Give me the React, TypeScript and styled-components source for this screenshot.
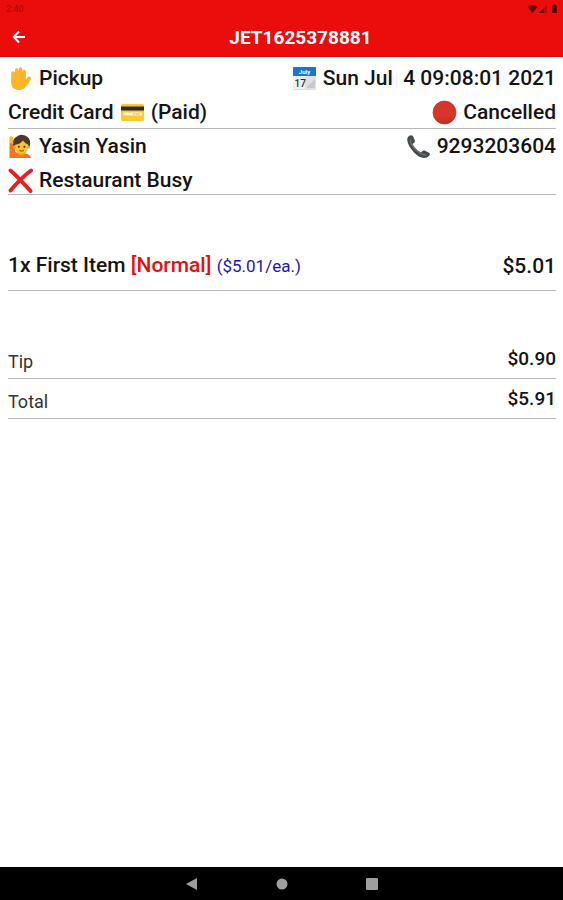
import React from "react";
import styled, { createGlobalStyle } from "styled-components";

const GlobalStyle = createGlobalStyle`
  * { box-sizing: border-box; }
  body { margin: 0; background: #fff; color: #141414; font-family: Roboto, sans-serif; }
`;

const Screen = styled.div`
  min-height: 100vh;
  display: flex;
  flex-direction: column;
`;

const TopArea = styled.header`
  background: #ea0d0c;
  border-bottom: 1px solid #d50b0b;
`;

const StatusBar = styled.div`
  display: flex;
  justify-content: space-between;
  align-items: center;
  height: 18px;
  padding: 0 4px 0 6px;
  color: #a50a08;
  font-size: 9px;
  line-height: 12px;
`;

const StatusIcons = styled.svg`
  width: 32px;
  height: 10px;
`;

const TitleBar = styled.div`
  display: grid;
  grid-template-columns: 38px 1fr;
  align-items: center;
  height: 38px;
`;

const BackButton = styled.button`
  display: flex;
  align-items: center;
  justify-content: center;
  height: 38px;
  padding: 0;
  border: 0;
  background: none;
  color: #fff;
`;

const Title = styled.h1`
  margin: 0;
  padding-top: 2px;
  color: #fff;
  font-size: 19px;
  line-height: 24px;
  font-weight: 700;
  text-align: center;
`;

const Content = styled.main`
  flex: 1;
  padding: 0 7px 0 8px;
`;

const Group = styled.section<{ $top: number; $bottom: number }>`
  display: flex;
  flex-direction: column;
  gap: 6px;
  padding: ${(p) => p.$top}px 0 ${(p) => p.$bottom}px;
  border-bottom: 1px solid #b8b8b8;
`;

const Row = styled.div`
  display: flex;
  justify-content: space-between;
  align-items: center;
`;

const Label = styled.span`
  display: inline-flex;
  align-items: center;
  gap: 6px;
  height: 28px;
  font-size: 21px;
  line-height: 28px;
  font-weight: 500;
  white-space: pre;
`;

const ItemName = styled.span`
  font-size: 21px;
  line-height: 28px;
  font-weight: 500;
`;

const Option = styled.span`
  color: #e3100e;
`;

const Each = styled.span`
  color: #1b14b4;
  font-size: 17px;
  font-weight: 400;
`;

const Price = styled.span<{ $small?: boolean }>`
  font-size: ${(p) => (p.$small ? 19 : 21)}px;
  line-height: 28px;
  font-weight: 500;
`;

const SummaryName = styled.span`
  padding-top: 6px;
  color: #333;
  font-size: 18px;
  line-height: 22px;
`;

const Emoji = styled.svg`
  width: 25px;
  height: 25px;
  flex: none;
`;

const NavBar = styled.nav`
  display: flex;
  justify-content: center;
  align-items: center;
  gap: 66px;
  height: 33px;
  background: #000;
`;

const NavButton = styled.button`
  display: flex;
  width: 24px;
  height: 24px;
  padding: 5px;
  border: 0;
  background: none;
  color: #9e9e9e;
`;

const Hand = () => (
  <Emoji viewBox="0 0 25 25" aria-hidden="true">
    <g stroke="#fbb623" strokeWidth="3.5" strokeLinecap="round" fill="none">
      <path d="M5 7v9M8.700 4v11M12.500 3v12M16.200 5.200v11" />
      <path d="M21 12.500l-3 5" strokeWidth="4" />
    </g>
    <path d="M3.300 12h14.500v4l3-2c1 1-1 4-3 6.500-2 3-4 3.700-7.500 3.500-4-.3-7-3-7-7z" fill="#fbb623" />
    <path d="M6.900 6v6M10.700 5v7M14.400 6v6M17.800 15c-2 0-4 1.500-4.300 4" fill="none" stroke="#f0a41c" strokeWidth=".7" />
  </Emoji>
);

const Card = () => (
  <Emoji viewBox="0 0 25 25" aria-hidden="true">
    <rect x="1" y="4" width="23" height="17" rx="1.500" fill="#fcc92f" />
    <rect x="1" y="6.500" width="23" height="4" fill="#2d2a2c" />
    <rect x="3" y="12.500" width="19" height="3" fill="#fff4d0" />
    <path d="M13 14.500l2-1 1 1 2-1 2 1" stroke="#8f8a78" strokeWidth=".6" fill="none" />
  </Emoji>
);

const Calendar = () => (
  <Emoji viewBox="0 0 25 25" aria-hidden="true">
    <rect x="1" y="1" width="23" height="23" rx="1" fill="#e0e0e0" />
    <rect x="1" y="9" width="12" height="14" fill="#f0f0f0" />
    <path d="M1 2q0-1 1-1h21q1 0 1 1v8H1z" fill="#1976d2" />
    <text x="12.500" y="7.500" textAnchor="middle" fontFamily="Roboto, sans-serif" fontSize="6" fontWeight="700" fill="#fff">July</text>
    <text x="2.500" y="21" fontFamily="Roboto, sans-serif" fontSize="10" fill="#333">17</text>
    <path d="M15 21l8-8v9h-8z" fill="#c9c9c9" />
  </Emoji>
);

const RedCircle = () => (
  <Emoji viewBox="0 0 25 25" aria-hidden="true">
    <defs>
      <linearGradient id="red-ball" x1="0" y1="0" x2="0" y2="1">
        <stop offset="0" stopColor="#d0372a" />
        <stop offset=".6" stopColor="#dc3528" />
        <stop offset="1" stopColor="#bd3025" />
      </linearGradient>
    </defs>
    <circle cx="12.500" cy="12.500" r="11.500" fill="url(#red-ball)" stroke="#b93227" strokeWidth=".7" />
  </Emoji>
);

const Person = () => (
  <Emoji viewBox="0 0 25 25" aria-hidden="true">
    <path d="M1.500 24V9l4-1 2 10q5 3 9 1.500 6 .5 6.500 4.500z" fill="#ee7623" />
    <path d="M1.500 9Q.5 4 2.500 2l2.500 1 1 4-.5 3z" fill="#fbb92c" />
    <path d="M9 19q4.500 5 9 0v-3H9z" fill="#f2a126" />
    <path d="M5.500 12Q4 4.500 9 2.500 12-.5 17 1.500q6 2 5 10l-1 2H6z" fill="#50352c" />
    <ellipse cx="13.500" cy="12.500" rx="6.900" ry="7" fill="#fcc231" />
    <circle cx="6.500" cy="13" r="1.500" fill="#f2a126" />
    <circle cx="20.500" cy="13" r="1.500" fill="#f2a126" />
    <path d="M6.500 11q6-1 8.500-4.500 2 3.500 6 4.500l-.500-5-6-3-6 2z" fill="#50352c" />
    <circle cx="10.800" cy="12.800" r="1" fill="#44332b" />
    <circle cx="16.500" cy="12.800" r="1" fill="#44332b" />
    <path d="M11.300 16.200q2.400 1.500 4.600 0" stroke="#9a5a22" strokeWidth="1.100" fill="none" />
  </Emoji>
);

const Cross = () => (
  <Emoji viewBox="0 0 25 25" aria-hidden="true">
    <path d="M2.500 2.500Q10 9 22.500 23M23 2.500Q13 10 2.500 22.500" stroke="#e5201f" strokeWidth="3.900" strokeLinecap="round" fill="none" />
  </Emoji>
);

const Phone = () => (
  <Emoji viewBox="0 0 25 25" aria-hidden="true">
    <path d="M2 3Q4 0 7 2l2 5q0 2-2.500 3 3 6 8.500 8.500 1.500-2.500 3.500-2l5 2.500q1 1-.5 3-2 2-5 2-5-.5-10-5.500Q2 12 1.300 6.500 1 4 2 3z" fill="#454a4c" />
    <path d="M4.500 5q-1 4 5 10.500Q14 20.500 20 21" stroke="#6d7375" strokeWidth="1.300" fill="none" />
  </Emoji>
);

export default function App() {
  return (
    <Screen>
      <GlobalStyle />
      <TopArea>
        <StatusBar>
          <span>2:40</span>
          <StatusIcons viewBox="0 0 32 10" fill="#650504" aria-label="Wi-Fi, signal, battery">
            <path d="M.5 3Q5.500-1 10.500 3L5.500 9z" />
            <path d="M12 9l8-8v8z" opacity=".35" />
            <path d="M12 9l5-5v5z" />
            <path d="M25 1.500h1V.5h3v1h1V9h-5z" />
          </StatusIcons>
        </StatusBar>
        <TitleBar>
          <BackButton aria-label="Back">
            <svg width="14" height="14" viewBox="0 0 14 14" fill="none" stroke="currentColor" strokeWidth="2">
              <path d="M13 7H2M7 1.500L1.800 7 7 12.500" />
            </svg>
          </BackButton>
          <Title>JET1625378881</Title>
        </TitleBar>
      </TopArea>
      <Content>
        <Group $top={7} $bottom={2}>
          <Row>
            <Label><Hand />Pickup</Label>
            <Label><Calendar />{"Sun Jul  4 09:08:01 2021"}</Label>
          </Row>
          <Row>
            <Label>Credit Card<Card />(Paid)</Label>
            <Label><RedCircle />Cancelled</Label>
          </Row>
        </Group>
        <Group $top={3} $bottom={0}>
          <Row>
            <Label><Person />Yasin Yasin</Label>
            <Label><Phone />9293203604</Label>
          </Row>
          <Row>
            <Label><Cross />Restaurant Busy</Label>
          </Row>
        </Group>
        <Group $top={56} $bottom={10}>
          <Row>
            <ItemName>1x First Item <Option>[Normal]</Option> <Each>($5.01/ea.)</Each></ItemName>
            <Price>$5.01</Price>
          </Row>
        </Group>
        <Group $top={54} $bottom={5}>
          <Row>
            <SummaryName>Tip</SummaryName>
            <Price $small>$0.90</Price>
          </Row>
        </Group>
        <Group $top={6} $bottom={5}>
          <Row>
            <SummaryName>Total</SummaryName>
            <Price $small>$5.91</Price>
          </Row>
        </Group>
      </Content>
      <NavBar>
        <NavButton aria-label="Back">
          <svg width="14" height="14" viewBox="0 0 14 14" fill="currentColor"><path d="M12 1v12L1 7z" /></svg>
        </NavButton>
        <NavButton aria-label="Home">
          <svg width="14" height="14" viewBox="0 0 14 14" fill="currentColor"><circle cx="7" cy="7" r="5.500" /></svg>
        </NavButton>
        <NavButton aria-label="Recent apps">
          <svg width="14" height="14" viewBox="0 0 14 14" fill="currentColor"><rect x="1" y="1" width="12" height="12" rx="1" /></svg>
        </NavButton>
      </NavBar>
    </Screen>
  );
}
